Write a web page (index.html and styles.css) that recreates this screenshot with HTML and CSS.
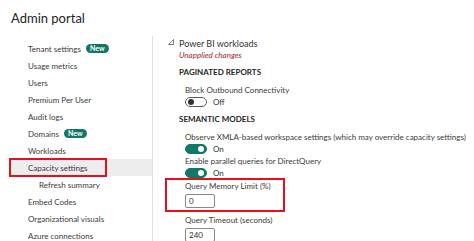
FILE: index.html
```html
<!DOCTYPE html>
<html lang="en">
<head>
    <meta charset="UTF-8">
    <meta name="viewport" content="width=device-width, initial-scale=1.0">
    <title>Admin portal</title>
    <link rel="stylesheet" href="styles.css">
</head>
<body>
<div class="header">
    <h1>Admin portal</h1>
</div>
<div class="layout">
    <div class="sidebar">
        <div class="nav-item">Tenant settings <span class="badge">New</span></div>
        <div class="nav-item">Usage metrics</div>
        <div class="nav-item">Users</div>
        <div class="nav-item">Premium Per User</div>
        <div class="nav-item">Audit logs</div>
        <div class="nav-item">Domains <span class="badge">New</span></div>
        <div class="nav-item">Workloads</div>
        <div class="nav-item active">Capacity settings<span class="mark"></span></div>
        <div class="nav-item sub">Refresh summary</div>
        <div class="nav-item">Embed Codes</div>
        <div class="nav-item">Organizational visuals</div>
        <div class="nav-item">Azure connections</div>
    </div>

    <div class="main">
        <div class="group-title">
            <svg class="caret" width="6" height="6" viewBox="0 0 6 6">
                <path d="M5.5 0.5 L5.5 5.5 L0.5 5.5 Z" fill="none" stroke="#605e5c" stroke-width="0.8"/>
            </svg>
            <span>Power BI workloads</span>
        </div>
        <div class="unapplied">Unapplied changes</div>

        <div class="section">PAGINATED REPORTS</div>
        <div class="setting first">
            <div class="label">Block Outbound Connectivity</div>
            <div class="toggle-row">
                <span class="toggle"><span class="knob"></span></span>
                <span>Off</span>
            </div>
        </div>

        <div class="section">SEMANTIC MODELS</div>
        <div class="setting first">
            <div class="label">Observe XMLA-based workspace settings (which may override capacity settings)</div>
            <div class="toggle-row">
                <span class="toggle on"><span class="knob"></span></span>
                <span>On</span>
            </div>
        </div>
        <div class="setting">
            <div class="label">Enable parallel queries for DirectQuery</div>
            <div class="toggle-row">
                <span class="toggle on"><span class="knob"></span></span>
                <span>On</span>
            </div>
        </div>
        <div class="setting boxed">
            <div class="label">Query Memory Limit (%)</div>
            <input class="num" type="text" value="0">
            <span class="mark"></span>
        </div>
        <div class="setting spaced">
            <div class="label">Query Timeout (seconds)</div>
            <input class="num" type="text" value="240">
        </div>
    </div>
</div>
</body>
</html>
```

FILE: styles.css
```css
body {
    font-family: Lato, "Open Sans", sans-serif;
    font-size: 8px;
    color: #323130;
    background-color: white;
    margin: 0;
    padding: 0;
    overflow: hidden;
}
.header {
    height: 36px;
    padding-left: 11px;
}
.header h1 {
    margin: 0;
    padding-top: 9px;
    font-size: 13px;
    font-weight: 400;
    line-height: 18px;
    color: #252423;
}
.layout {
    display: flex;
}
.sidebar {
    flex-shrink: 0;
    width: 142px;
    margin-left: 10px;
    padding-top: 4px;
}
.nav-item {
    position: relative;
    display: flex;
    align-items: center;
    gap: 5px;
    height: 17px;
    padding-left: 18px;
    color: #3b3a39;
}
.nav-item.sub {
    padding-left: 29px;
}
.nav-item.active {
    background-color: #ededed;
}
.nav-item .mark {
    position: absolute;
    left: -1px;
    top: -1px;
    width: 94px;
    height: 15px;
    border: 2px solid #e3111f;
}
.badge {
    background-color: #117865;
    color: white;
    font-size: 7px;
    font-weight: 700;
    line-height: 9px;
    padding: 0 4px;
    border-radius: 5px;
}
.main {
    flex: 1;
    min-width: 0;
    border-left: 1px solid #e1dfdd;
    padding-left: 15px;
}
.group-title {
    display: flex;
    align-items: center;
    gap: 5px;
    height: 12px;
    margin-top: 1px;
    font-size: 9px;
}
.caret {
    margin-top: -2px;
}
.unapplied {
    padding-left: 11px;
    height: 12px;
    line-height: 12px;
    font-style: italic;
    color: #a4262c;
}
.section {
    padding-left: 11px;
    margin-top: 5px;
    height: 12px;
    line-height: 12px;
    font-weight: 700;
    color: #252423;
}
.setting + .section {
    margin-top: 6px;
}
.setting {
    position: relative;
    padding-left: 17px;
    margin-top: 1px;
}
.setting.first {
    margin-top: 6px;
}
.setting.boxed {
    margin-top: 2px;
}
.setting.spaced {
    margin-top: 6px;
}
.label {
    height: 12px;
    line-height: 12px;
    color: #3b3a39;
    white-space: nowrap;
}
.toggle-row {
    display: flex;
    align-items: center;
    gap: 6px;
    height: 10px;
    margin-top: 1px;
}
.toggle {
    display: flex;
    align-items: center;
    box-sizing: border-box;
    width: 22px;
    height: 10px;
    border: 1px solid #605e5c;
    border-radius: 5px;
    padding: 0 2px;
}
.toggle .knob {
    width: 6px;
    height: 6px;
    border-radius: 50%;
    background-color: #323130;
}
.toggle.on {
    background-color: #117865;
    border-color: #117865;
    justify-content: flex-end;
}
.toggle.on .knob {
    background-color: white;
}
.num {
    display: block;
    box-sizing: border-box;
    width: 30px;
    height: 14px;
    margin: 2px 0 0 0;
    padding: 0 3px;
    border: 1px solid #8a8886;
    border-radius: 2px;
    font-family: inherit;
    font-size: 8px;
    color: #323130;
}
.setting .mark {
    position: absolute;
    left: -3px;
    top: -2px;
    width: 116px;
    height: 30px;
    border: 2px solid #e3111f;
}
```
